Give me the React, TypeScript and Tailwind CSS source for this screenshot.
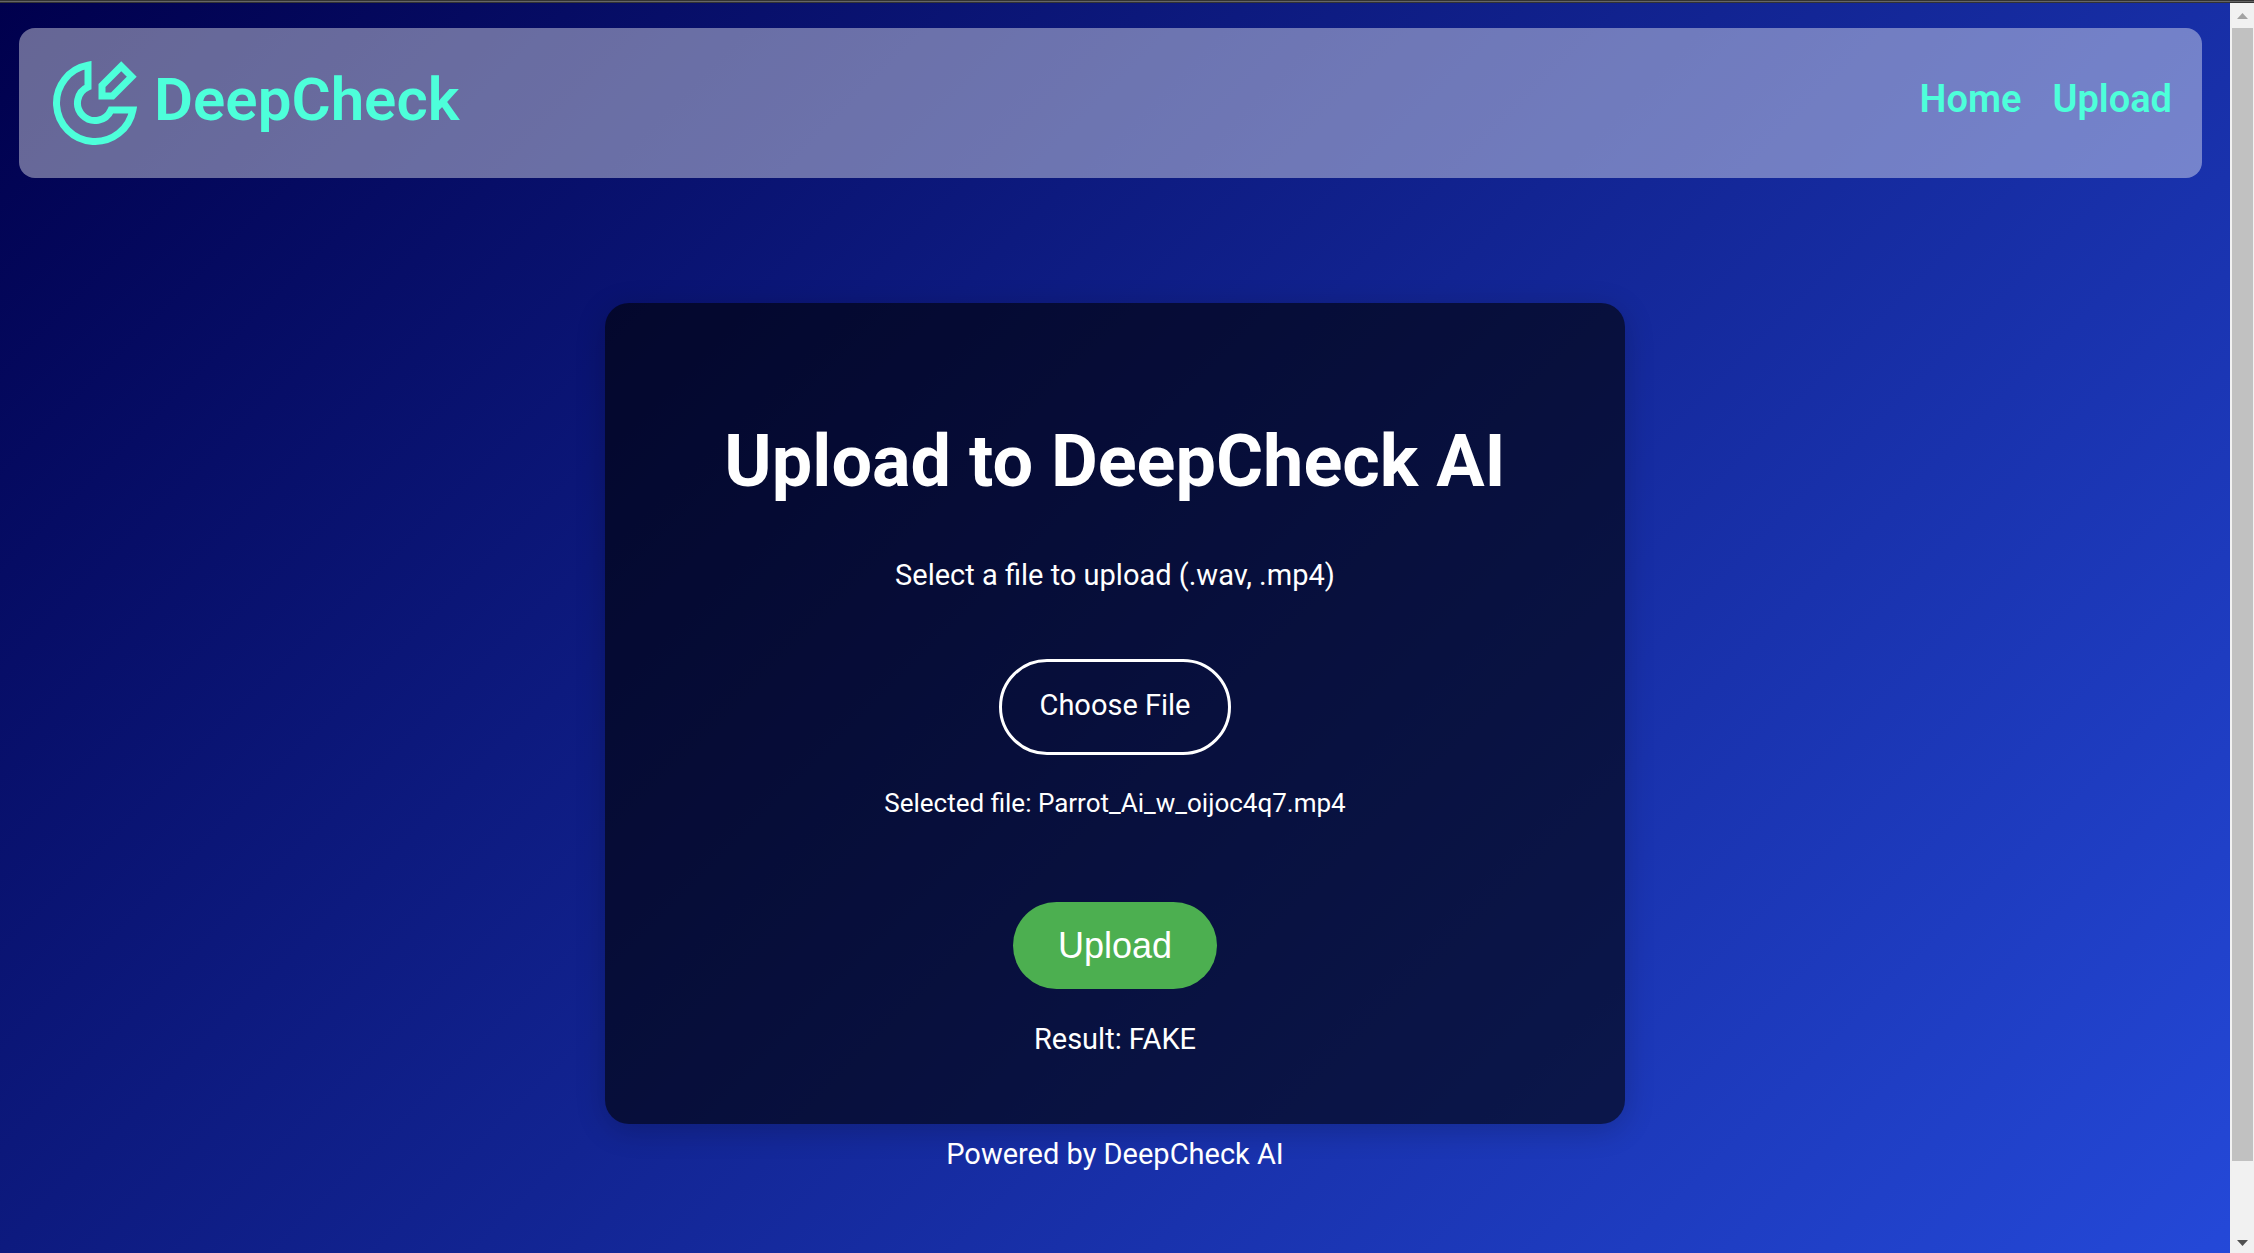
import { useState } from "react"

function Logo() {
    return (
        <svg viewBox="0 0 24 24" className="size-[84px] shrink-0" fill="none" stroke="currentColor" strokeWidth="2" aria-hidden="true">
            <path d="M22.82 14A11 11 0 1 1 10 1.18V7.42A5 5 0 1 0 16.58 14z" />
            <path d="M14 10V7l5.5-5.5 3 3L17 10z" />
        </svg>
    )
}

function Header() {
    return (
        <header className="mt-[25px] mr-[28px] ml-[19px] flex h-[150px] items-center justify-between rounded-2xl bg-white/40 pr-[30px] pl-[34px] text-[#4dffda]">
            <a href="#home" className="flex items-center gap-[17px]">
                <Logo />
                <span className="pb-1.5 text-[60px] leading-[72px] font-semibold">DeepCheck</span>
            </a>
            <nav className="flex gap-[31px] pb-2 text-[38px] leading-[48px] font-semibold">
                <a href="#home">Home</a>
                <a href="#upload">Upload</a>
            </nav>
        </header>
    )
}

function UploadCard() {
    const [fileName, setFileName] = useState("Parrot_Ai_w_oijoc4q7.mp4")

    return (
        <main className="mt-[125px] flex w-full max-w-[1020px] flex-col items-center rounded-3xl bg-black/60 px-[60px] pt-[111px] pb-[67px] text-[29px] leading-[36px] shadow-[0_6px_30px_rgba(0,0,0,0.2)]">
            <h1 className="text-center text-[72px] leading-[96px] font-bold">Upload to DeepCheck AI</h1>
            <p className="mt-[47px]">Select a file to upload (.wav, .mp4)</p>
            <label className="mt-[66px] flex h-24 cursor-pointer items-center rounded-full border-3 border-white px-[38px] pb-1 focus-within:outline-2">
                Choose File
                <input
                    type="file"
                    accept=".wav,.mp4"
                    className="sr-only"
                    onChange={(e) => setFileName(e.target.files?.[0]?.name ?? fileName)}
                />
            </label>
            <p className="mt-[30px] text-[26px]">Selected file: {fileName}</p>
            <button type="button" className="mt-[81px] h-[87px] cursor-pointer rounded-full bg-[#4caf50] px-[45px] font-['Liberation_Sans',Arial,sans-serif] text-[36px]">
                Upload
            </button>
            <p className="mt-[32px]">Result: FAKE</p>
        </main>
    )
}

function Scrollbar() {
    return (
        <div className="flex w-6 shrink-0 flex-col items-center bg-[#f1f1f1]" aria-hidden="true">
            <svg viewBox="0 0 24 25" className="h-[25px] w-6 shrink-0" fill="#a3a3a3">
                <path d="M12.5 10L18 16H7z" />
            </svg>
            <div className="w-[21px] grow bg-[#c1c1c1]"></div>
            <div className="h-16 shrink-0"></div>
            <svg viewBox="0 0 24 28" className="h-7 w-6 shrink-0" fill="#505050">
                <path d="M7 15h11l-5.5 6z" />
            </svg>
        </div>
    )
}

function App() {
    return (
        <div className="flex h-screen flex-col font-[Roboto,sans-serif] text-white">
            <div className="h-[3px] shrink-0 border-y border-[#333333] bg-[#666666]"></div>
            <div className="flex min-h-0 grow">
                <div className="min-w-0 grow overflow-hidden">
                    <div className="flex min-h-[calc(100vh+68px)] flex-col bg-linear-[135deg,#00004d,#254adb]">
                        <Header />
                        <div className="flex flex-col items-center">
                            <UploadCard />
                            <footer className="mt-3 text-[29px] leading-[36px]">Powered by DeepCheck AI</footer>
                        </div>
                    </div>
                </div>
                <Scrollbar />
            </div>
        </div>
    )
}

export default App
